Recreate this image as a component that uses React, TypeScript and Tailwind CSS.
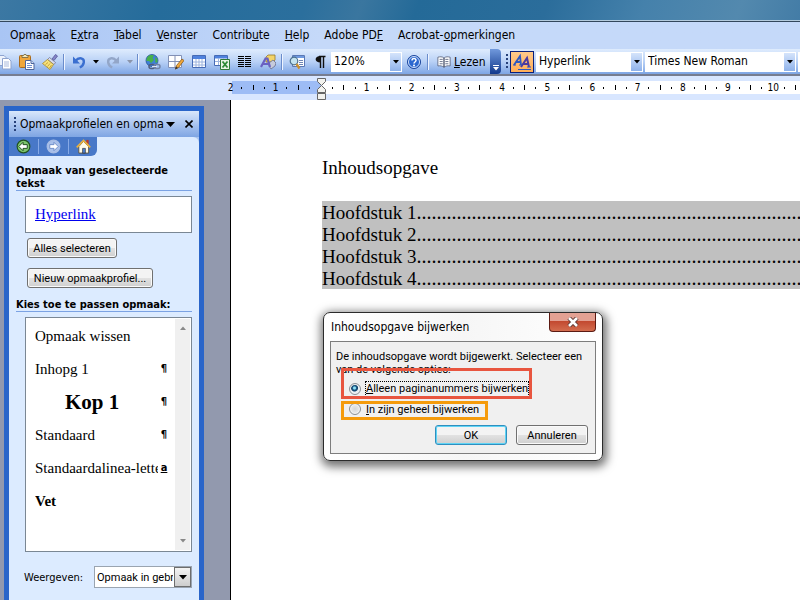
import React, { useState } from 'react';

const UI_FONT = "font-['DejaVu_Sans_Condensed','DejaVu_Sans',sans-serif]";
const SMALL_FONT = "font-['Roboto',sans-serif]";
const DOC_FONT = "font-['Liberation_Serif',serif]";

// [before, access key, after]
const MENU = [
  ['Opmaa', 'k', ''],
  ['E', 'x', 'tra'],
  ['', 'T', 'abel'],
  ['', 'V', 'enster'],
  ['Contrib', 'u', 'te'],
  ['', 'H', 'elp'],
  ['Adobe PD', 'F', ''],
  ['Acrobat-', 'o', 'pmerkingen'],
];

const CHAPTERS = ['Hoofdstuk 1', 'Hoofdstuk 2', 'Hoofdstuk 3', 'Hoofdstuk 4'];

const STYLES = [
  { name: 'Opmaak wissen', cls: 'text-[15px]', mark: '' },
  { name: 'Inhopg 1', cls: 'text-[15px]', mark: '¶' },
  { name: 'Kop 1', cls: 'text-[21px] font-bold pl-[30px]', mark: '¶' },
  { name: 'Standaard', cls: 'text-[15px]', mark: '¶' },
  { name: 'Standaardalinea-lette', cls: 'text-[15px]', mark: 'a' },
  { name: 'Vet', cls: 'text-[15px] font-bold', mark: '' },
];

const Icon = ({ children, className = 'w-4 h-4' }: { children: React.ReactNode; className?: string }) => (
  <svg viewBox="0 0 16 16" className={`${className} shrink-0`} aria-hidden="true">{children}</svg>
);

const CopyIcon = () => (
  <Icon>
    <path d="M2 1.5h6l2 2v8H2z" fill="#eef3fc" stroke="#8ea3cf" />
    <path d="M6.5 4.5h6l2.5 2.5v8H6.5z" fill="#fff" stroke="#8ea3cf" />
    <path d="M8 8h5M8 10h5M8 12h5" stroke="#a9b9dc" />
  </Icon>
);

const PasteIcon = () => (
  <Icon>
    <rect x="0.5" y="1.5" width="11" height="12" rx="1" fill="#f0a63a" stroke="#a96b1c" />
    <path d="M3 3.5V1.5h1.5L5 .5h2l.5 1H9v2z" fill="#f7e7b4" stroke="#6d6340" strokeWidth="0.8" />
    <path d="M6.5 6.5h5.5l3 3v6H6.5z" fill="#fff" stroke="#4d659c" />
    <path d="M12 6.5v3h3" fill="#cfdcf4" stroke="#4d659c" />
    <path d="M8 9.5h3M8 11.5h5M8 13.5h5" stroke="#6f8fd0" />
  </Icon>
);

const BrushIcon = () => (
  <Icon>
    <path d="M10 5l3.5-4.5L15.5 2 12 6.5z" fill="#8787c6" stroke="#54549a" strokeWidth="0.8" />
    <path d="M7.5 3.5l6 5-1.5 2-6.500-5z" fill="#d9dcec" stroke="#666a8d" strokeWidth="0.7" />
    <path d="M5.5 5.500l6 5L8 15.500.500 9.500z" fill="#f6e17d" stroke="#a88b2a" strokeWidth="0.8" />
    <path d="M3.5 10.5l2.5-2M5.5 12.5l2.5-3M7.5 14l2-3" stroke="#c9a538" />
  </Icon>
);

const UndoIcon = ({ color }: { color: string }) => (
  <Icon>
    <path d="M4.5 7C8 2.5 13.500 4 12.800 8.500c-.4 2.500-2 4-4 5" fill="none" stroke={color} strokeWidth="2.4" />
    <path d="M2 2.5V9.500h7z" fill={color} />
  </Icon>
);

const LinkIcon = () => (
  <Icon>
    <circle cx="7" cy="6.5" r="6" fill="#3f7fd6" stroke="#285596" strokeWidth="0.8" />
    <path d="M3 2.5C5 .5 8 1 9 1.5L7.5 4l1.500 2-3 3-2-2-2.500 0C1.500 5 2 3.500 3 2.500zM10 3l2.500 2 0 3-2 1z" fill="#47b04a" />
    <rect x="4" y="10.5" width="6" height="4" rx="2" fill="none" stroke="#4d5d80" strokeWidth="1.5" />
    <rect x="9" y="10.5" width="6" height="4" rx="2" fill="none" stroke="#7384a8" strokeWidth="1.5" />
    <path d="M7 12.5h5" stroke="#dfe6f5" />
  </Icon>
);

const BordersIcon = () => (
  <Icon>
    <path d="M.5 1.5h13v12H.5zM7 1.5v12M.5 7.5h13" fill="#fff" stroke="#8290b5" />
    <path d="M7.5 15l1-3.500 5.500-6.500 2 1.500-5.500 7z" fill="#f2a93c" stroke="#8a5a1c" strokeWidth="0.8" />
    <path d="M7 15.5l1-3 2 1.500z" fill="#333" />
  </Icon>
);

const TableIcon = () => (
  <Icon>
    <path d="M1.5 1.5h13v12h-13z" fill="#fff" stroke="#466bb5" />
    <path d="M2 2h12v3H2z" fill="#4f82de" />
    <path d="M2 8h12M2 11h12M5 5v8M8 5v8M11 5v8" stroke="#9db4de" />
  </Icon>
);

const ExcelIcon = () => (
  <Icon>
    <path d="M.5 1.5h13v10H.5z" fill="#fff" stroke="#466bb5" />
    <path d="M1 2h12v2.500H1z" fill="#4f82de" />
    <path d="M1 7.5h12M4.500 4v7M9.500 4v7" stroke="#9db4de" />
    <path d="M6.5 5.5h9v10h-9z" fill="#e8f3e4" stroke="#2f7a35" />
    <path d="M8.5 7.5l5 6M13.500 7.500l-5 6" stroke="#2c8a34" strokeWidth="1.8" />
  </Icon>
);

const ColumnsIcon = () => (
  <Icon>
    <path
      d="M1 2h6v1H1zM1 4h6v1H1zM1 6h6v1H1zM1 8h6v1H1zM1 10h6v1H1zM1 12h6v1H1zM8 2h6v1H8zM8 4h6v1H8zM8 6h6v1H8zM8 8h6v1H8zM8 10h6v1H8zM8 12h6v1H8z"
      fill="#000"
      shapeRendering="crispEdges"
    />
  </Icon>
);

const DrawingIcon = () => (
  <Icon>
    <path d="M6 3l2-2h7v5l-2 2H6z" fill="#f3d469" stroke="#957a2b" strokeWidth="0.8" />
    <path d="M9 9l4-3 3 3-1 3-4 3-2-3z" fill="#c6cbdb" stroke="#697090" strokeWidth="0.8" />
    <path d="M1 13L5.500 4.500h2L10 13M3 10h6" fill="none" stroke="#6a61c2" strokeWidth="2.2" />
  </Icon>
);

const DocMapIcon = () => (
  <Icon>
    <path d="M3.5 1.5h12v11h-12z" fill="#fff" stroke="#5a78b5" />
    <path d="M4 2h11v2H4z" fill="#6f9ae0" />
    <path d="M10 6.5h4M10 8.500h4M10 10.500h4" stroke="#6e86b5" />
    <circle cx="5" cy="7" r="3.8" fill="#c4e4f0" stroke="#4b708d" strokeWidth="1.2" />
    <path d="M7.5 10l3 4.500" stroke="#c99030" strokeWidth="2.4" />
  </Icon>
);

const HelpIcon = () => (
  <Icon>
    <circle cx="8" cy="8" r="6.5" fill="#2c68cf" stroke="#1c469c" />
    <circle cx="8" cy="8" r="5.5" fill="none" stroke="#cfe0fb" />
    <path d="M6 6.5c0-3 4.200-2.500 4 0-.2 1.500-2 1.500-2 3" fill="none" stroke="#fff" strokeWidth="1.5" />
    <circle cx="8" cy="11.5" r="1" fill="#fff" />
  </Icon>
);

const BookIcon = () => (
  <Icon className="w-[14px] h-[14px]">
    <path d="M8 3.5C6 1.500 3 2 1 2.500v10c3-.5 5 0 7 1.500 2-1.500 4-2 7-1.500v-10c-2-.5-5-1-7 1z" fill="#fff" stroke="#5d6680" />
    <path d="M8 3.5V14" stroke="#3c4560" strokeWidth="1.4" />
    <path d="M3 5h3.500M3 7.500h3.500M3 10h3.500M9.500 5H13M9.500 7.500H13M9.500 10H13" stroke="#5d6680" />
  </Icon>
);

const Arrow = ({ className = 'text-black' }: { className?: string }) => (
  <svg viewBox="0 0 6 4" className={`w-[6px] h-[4px] fill-current ${className}`} aria-hidden="true">
    <path d="M0 0h6L3 3.5z" />
  </svg>
);

const NavArrow = ({ ring, fill, ink, flip }: { ring: string; fill: string; ink: string; flip?: boolean }) => (
  <Icon className="w-[15px] h-[15px]">
    <circle cx="8" cy="8" r="6.8" fill={fill} stroke={ring} strokeWidth="1.2" />
    <path
      d={flip ? 'M13 8L8.500 3.500V6H4v4h4.500v2.500z' : 'M3 8l4.500-4.500V6H12v4H7.500v2.500z'}
      fill="#fff"
      stroke={ink}
      strokeWidth="1"
    />
  </Icon>
);

const HomeIcon = () => (
  <Icon className="w-[15px] h-[15px]">
    <path d="M11 1h2.500v5H11z" fill="#c43a22" />
    <path d="M3 8l5-5.500L13.500 8v7H3z" fill="#fffbe8" stroke="#5c5340" />
    <path d="M.8 9L8 1.500 15.200 9" fill="none" stroke="#ecb23d" strokeWidth="1.8" />
    <path d="M7 10h3v5H7z" fill="#4c7fd0" stroke="#333" strokeWidth="0.7" />
  </Icon>
);

const ToolButton = ({ label, children }: { label: string; children: React.ReactNode }) => (
  <button aria-label={label} className="flex w-[23px] h-6 shrink-0 items-center justify-center">{children}</button>
);

const DropButton = ({ label, dim }: { label: string; dim?: boolean }) => (
  <button aria-label={label} className="flex w-[11px] h-6 shrink-0 items-center justify-center">
    <Arrow className={dim ? 'text-[#8b95ab]' : 'text-black'} />
  </button>
);

const Separator = () => (
  <div className="flex w-[6px] shrink-0 justify-center">
    <div className="h-4 w-px bg-[#6a8ccb]" />
    <div className="h-4 w-px bg-[#eef4ff]" />
  </div>
);

const Combo = ({ label, value, width }: { label: string; value: string; width: string }) => (
  <div className={`relative flex h-5 shrink-0 bg-white ${width}`}>
    <select aria-label={label} className="w-full appearance-none bg-transparent pl-[3px] pr-3 pb-[2px] text-[12px] outline-none">
      <option>{value}</option>
    </select>
    <span className="pointer-events-none absolute inset-y-px right-px flex w-[11px] items-center justify-center bg-linear-to-b from-[#d5e4fb] to-[#8fb2ea]">
      <Arrow />
    </span>
  </div>
);

const Toolbar = () => (
  <div className="flex h-[27px] items-center border-b-2 border-[#777d90] bg-linear-to-b from-[#dfecfd] via-[#b9d1f6] to-[#7ea5e4] text-[12px] overflow-hidden">
    <div className="-ml-2 flex shrink-0 items-center">
      <ToolButton label="Kopiëren"><CopyIcon /></ToolButton>
      <ToolButton label="Plakken"><PasteIcon /></ToolButton>
      <ToolButton label="Opmaak kopiëren"><BrushIcon /></ToolButton>
      <Separator />
      <ToolButton label="Ongedaan maken"><UndoIcon color="#3a6fd0" /></ToolButton>
      <DropButton label="Acties" />
      <ToolButton label="Opnieuw">
        <span className="-scale-x-100"><UndoIcon color="#93a6c8" /></span>
      </ToolButton>
      <DropButton label="Opnieuw acties" dim />
      <Separator />
      <ToolButton label="Hyperlink invoegen"><LinkIcon /></ToolButton>
      <ToolButton label="Tabellen en randen"><BordersIcon /></ToolButton>
      <ToolButton label="Tabel invoegen"><TableIcon /></ToolButton>
      <ToolButton label="Werkblad invoegen"><ExcelIcon /></ToolButton>
      <ToolButton label="Kolommen"><ColumnsIcon /></ToolButton>
      <ToolButton label="Tekenen"><DrawingIcon /></ToolButton>
      <Separator />
      <ToolButton label="Documentstructuur"><DocMapIcon /></ToolButton>
      <ToolButton label="Weergeven">
        <Icon>
          <path d="M7 2.5h6.500M8.500 2v12M11.500 2v12" stroke="#111" strokeWidth="1.4" />
          <path d="M8.5 2C2 2 2 8.500 8.500 8.500z" fill="#111" />
        </Icon>
      </ToolButton>
      <Combo label="In- en uitzoomen" value="120%" width="w-[71px]" />
      <ToolButton label="Help"><HelpIcon /></ToolButton>
      <Separator />
      <button className="flex w-[59px] items-center gap-[3px] pl-[6px]">
        <BookIcon />
        <span><u>L</u>ezen</span>
      </button>
    </div>
    <button aria-label="Werkbalkopties" className="flex h-full w-[11px] shrink-0 flex-col items-center justify-end gap-px rounded-r-sm bg-linear-to-b from-[#7199dc] to-[#12388c] pb-[3px]">
      <span className="h-px w-[6px] bg-white" />
      <Arrow className="text-white" />
    </button>
    <div className="ml-[5px] flex shrink-0 items-center gap-[2px]">
      <div className="h-4 w-[2px] bg-[repeating-linear-gradient(to_bottom,#27417a_0_2px,transparent_2px_4px)]" />
      <button aria-label="Opmaakprofielen en opmaak" className="flex h-[22px] w-6 items-center justify-center border border-[#0a1f7a] bg-linear-to-b from-[#ffc98a] to-[#ffae57]">
        <svg viewBox="0 0 20 18" className="h-[18px] w-5" aria-hidden="true">
          <path d="M2 12L8 3l1 9M4.5 9H9" fill="none" stroke="#2c57c0" strokeWidth="1.8" />
          <path d="M9 14l6-9 2 9M11.5 11H17" fill="none" stroke="#4b3aa0" strokeWidth="2" />
          <path d="M1 12h3M7 12h3M15 14h4M6 16.5h13" stroke="#2c57c0" />
        </svg>
      </button>
      <Combo label="Opmaakprofiel" value="Hyperlink" width="w-[107px]" />
      <Combo label="Lettertype" value="Times New Roman" width="w-[151px]" />
      <Combo label="Tekengrootte" value="" width="w-[45px]" />
    </div>
  </div>
);

const RulerUnit = ({ before, after }: { before?: string; after?: string }) => (
  <div className="grid grid-cols-4 items-center justify-items-center">
    {before && <span>{before}</span>}
    <i className="h-[2px] w-px bg-black" />
    <i className="h-[5px] w-px bg-black" />
    <i className="h-[2px] w-px bg-black" />
    {after && <span>{after}</span>}
  </div>
);

const Ruler = () => (
  <div className="flex h-6 items-start overflow-hidden bg-[#d8e6ff] pt-[5px] text-[10px] leading-[13px]">
    <div className="ml-[225px] w-[97px] shrink-0 bg-[linear-gradient(to_right,transparent_7px,#9dbcf5_7px)]">
      <div className="grid w-[90px] grid-cols-2">
        <RulerUnit before="2" />
        <RulerUnit before="1" />
      </div>
    </div>
    <div className="relative shrink-0 bg-white pl-[5px]">
      <div className="grid w-[497px] grid-cols-11">
        {['1', '2', '3', '4', '5', '6', '7', '8', '9', '10', ''].map((n) => (
          <RulerUnit key={n} after={n} />
        ))}
      </div>
      {/* indent markers */}
      <svg viewBox="0 0 9 22" className="absolute -left-[5px] -top-[3px] h-[22px] w-[9px]" aria-hidden="true">
        <path d="M.5.5h8v3l-4 4-4-4z" fill="#f2f2ee" stroke="#666" />
        <path d="M.5 14.5v-3l4-4 4 4v3z" fill="#f2f2ee" stroke="#666" />
        <path d="M.5 15.5h8v6h-8z" fill="#f2f2ee" stroke="#666" />
      </svg>
    </div>
  </div>
);

const BUTTON =
  'h-5 rounded-[3px] border bg-linear-to-b from-[#f3f3f3] from-50% via-[#e2e2e2] via-50% to-[#cfcfcf] text-[11px] leading-[13px] whitespace-nowrap';
const PLAIN = 'border-[#707070] shadow-[inset_0_0_0_1px_#fafafa]';
const DEFAULT = 'border-[#2f8fbf] shadow-[inset_0_0_0_1px_#5fd4f5]';

const TaskPane = () => (
  <aside className="ml-1 mt-[6px] flex w-[200px] shrink-0 flex-col border-x-[5px] border-t-[5px] border-[#2a65c9] bg-[#dcebff]">
    <div className="flex h-[26px] items-center bg-linear-to-b from-[#d9e7fb] to-[#7fa5e3] pl-[5px] pr-[5px]">
      <div className="h-[15px] w-[2px] shrink-0 bg-[repeating-linear-gradient(to_bottom,#27417a_0_2px,transparent_2px_4px)]" />
      <h2 className="ml-1 w-[144px] shrink-0 overflow-hidden whitespace-nowrap text-[12px]">Opmaakprofielen en opmaak</h2>
      <button aria-label="Andere taakvensters" className="flex w-[13px] shrink-0 justify-center">
        <svg viewBox="0 0 9 5" className="h-[5px] w-[9px]" aria-hidden="true"><path d="M0 0h9L4.5 5z" /></svg>
      </button>
      <button aria-label="Sluiten" className="ml-2 shrink-0">
        <svg viewBox="0 0 8 8" className="h-2 w-2" aria-hidden="true"><path d="M.5.5l7 7M7.5.5l-7 7" stroke="#000" strokeWidth="1.6" /></svg>
      </button>
    </div>
    <div className="bg-[linear-gradient(to_right,#4878c8_20px,#a9c4ef_120px)]">
      <div className="rounded-tr-[6px] bg-[#dcebff]">
        <nav className="flex h-[19px] w-[88px] items-center rounded-br-[6px] bg-[#4878c8] pl-[7px]">
          <button aria-label="Vorige"><NavArrow ring="#20511d" fill="#7cc46c" ink="#1d4a1a" /></button>
          <div className="mx-[7px] h-[15px] w-px bg-[#86a9e6]" />
          <button aria-label="Volgende"><NavArrow ring="#a9bde4" fill="#a9c0ea" ink="#6d8cc9" flip /></button>
          <div className="mx-[7px] h-[15px] w-px bg-[#86a9e6]" />
          <button aria-label="Start"><HomeIcon /></button>
        </nav>
      </div>
    </div>

    <div className="flex flex-1 flex-col pl-[7px] pr-[7px] text-[11px] leading-[13px]">
      <h3 className="mt-2 border-b border-[#7ba2e3] font-bold">Opmaak van geselecteerde tekst</h3>
      <div className={`ml-[9px] mt-[5px] flex h-[37px] items-center border border-[#7a8794] bg-white pl-[9px] text-[15px] ${DOC_FONT}`}>
        <a href="#hyperlink" className="text-[#0000ee] underline">Hyperlink</a>
      </div>
      <button className={`${BUTTON} ${PLAIN} ${SMALL_FONT} ml-[11px] mt-[5px] w-[90px]`}>Alles selecteren</button>
      <button className={`${BUTTON} ${PLAIN} ${SMALL_FONT} ml-[11px] mt-[10px] w-[126px]`}>Nieuw opmaakprofiel...</button>
      <h3 className="mt-[10px] border-b border-[#7ba2e3] font-bold whitespace-nowrap">Kies toe te passen opmaak:</h3>

      <div className="ml-[9px] mt-[5px] flex h-[235px] border border-[#7a8794] bg-white">
        <ul className="min-w-0 flex-1 pt-px">
          {STYLES.map((s) => (
            <li key={s.name} className="flex h-[33px] items-center pl-[9px] pr-1">
              <span className={`w-[123px] shrink-0 overflow-hidden whitespace-nowrap leading-[24px] ${DOC_FONT} ${s.cls}`}>{s.name}</span>
              <span className={`flex-1 text-center font-bold ${s.mark === 'a' ? 'underline' : ''}`}>{s.mark}</span>
            </li>
          ))}
        </ul>
        <div className="m-px flex w-[15px] shrink-0 flex-col items-center justify-between bg-[#f0f0f0] py-[7px]">
          <Arrow className="rotate-180 text-[#888]" />
          <Arrow className="text-[#888]" />
        </div>
      </div>

      <div className="mt-[14px] flex items-center justify-between pl-2">
        <label htmlFor="show">Weergeven:</label>
        <div className="relative w-[98px] border border-[#9aa4b0] bg-white">
          <select id="show" className={`block h-5 w-full appearance-none overflow-hidden bg-transparent pl-[2px] pr-[18px] text-[11px] outline-none ${SMALL_FONT}`}>
            <option>Opmaak in gebruik</option>
          </select>
          <span className="pointer-events-none absolute inset-y-0 right-0 flex w-[17px] items-center justify-center border border-[#6d6d6d] bg-linear-to-b from-[#f4f4f4] to-[#cdcdcd]">
            <svg viewBox="0 0 8 5" className="h-[5px] w-2" aria-hidden="true"><path d="M0 0h8L4 4.5z" /></svg>
          </span>
        </div>
      </div>
    </div>
  </aside>
);

const UpdateDialog = () => {
  const [mode, setMode] = useState('pages');
  const radio =
    'h-3 w-3 shrink-0 appearance-none rounded-full border border-[#8a8f94] bg-[radial-gradient(circle,#d4d6d8,#f6f6f6)] shadow-[inset_0_0_0_1px_#f4f4f4] checked:bg-[radial-gradient(circle_at_45%_40%,#8fe0f5_0_1px,#1c5f8c_2px,#0d3c63_3px,#e8eef2_4px)]';

  return (
    <div role="dialog" aria-labelledby="dialog-title" className="absolute left-[323px] top-[312px] w-[280px] rounded-[7px] border border-[#2b2b2b] bg-linear-to-r from-white via-[#f6f6f6] to-white px-[6px] pb-[6px] shadow-[1px_3px_10px_3px_rgba(0,0,0,0.55)]">
      <div className="flex h-7 items-start justify-between">
        <h2 id="dialog-title" className="pl-px pt-[6px] text-[12px] leading-4">Inhoudsopgave bijwerken</h2>
        <button aria-label="Sluiten" className="flex h-[19px] w-[47px] items-center justify-center rounded-b-[4px] border border-t-0 border-[#5b1a12] bg-linear-to-b from-[#e3a193] from-45% via-[#c2482f] via-45% to-[#d36c4e]">
          <svg viewBox="0 0 12 10" className="h-[10px] w-3" aria-hidden="true">
            <path d="M2 1l8 8M10 1L2 9" stroke="#5a3430" strokeWidth="4.4" />
            <path d="M2 1l8 8M10 1L2 9" stroke="#fff" strokeWidth="2.6" />
          </svg>
        </button>
      </div>
      <div className={`relative border border-[#7d7d7d] bg-[#f0f0f0] pb-2 pl-[5px] pr-[7px] pt-2 text-[11px] leading-[13px] ${SMALL_FONT}`}>
        <p className="whitespace-nowrap">
          De inhoudsopgave wordt bijgewerkt. Selecteer een<br />van de volgende opties:
        </p>
        <div className="mt-[5px] flex flex-col gap-1 pl-[13px]">
          <label className="flex h-4 items-center gap-[4px]">
            <input type="radio" name="mode" className={radio} checked={mode === 'pages'} onChange={() => setMode('pages')} />
            <span className="whitespace-nowrap border border-dotted border-black leading-[14px]"><u>A</u>lleen paginanummers bijwerken</span>
          </label>
          <label className="flex h-4 items-center gap-[5px]">
            <input type="radio" name="mode" className={radio} checked={mode === 'all'} onChange={() => setMode('all')} />
            <span className="whitespace-nowrap"><u>I</u>n zijn geheel bijwerken</span>
          </label>
        </div>
        <div className="mt-2 flex justify-end gap-[9px]">
          <button className={`${BUTTON} ${DEFAULT} w-[72px]`}>OK</button>
          <button className={`${BUTTON} ${PLAIN} w-[72px]`}>Annuleren</button>
        </div>
        {/* highlight frames drawn over the two options */}
        <div className="pointer-events-none absolute left-[10px] top-[26px] h-[31px] w-[191px] border-[3px] border-[#e8553f]" />
        <div className="pointer-events-none absolute left-[10px] top-[59px] h-[19px] w-[147px] border-[3px] border-[#f59b0c]" />
      </div>
    </div>
  );
};

export default function App() {
  return (
    <div className={`relative flex min-h-screen flex-col overflow-hidden bg-white text-black ${UI_FONT}`}>
      <div className="h-[22px] border-b border-[#33475c] bg-[linear-gradient(110deg,#3c78a3_0%,#256c9b_20%,#2b6f9d_38%,#3a769f_45%,#246a98_52%,#2b6d9b_68%,#4581ab_80%,#5389ae_92%,#437ca6_100%)] pt-5">
        <div className="h-px bg-[#b4cbdd]" />
      </div>
      <nav className="flex h-[27px] shrink-0 items-center gap-[15px] bg-linear-to-r from-[#a9c5f4] to-[#c5d9f9] to-40% pl-[10px] pb-px text-[12px]">
        {MENU.map(([before, key, after]) => (
          <button key={before + key + after} className="whitespace-nowrap">
            {before}<u>{key}</u>{after}
          </button>
        ))}
      </nav>
      <Toolbar />
      <Ruler />
      <main className="flex flex-1 bg-[#9299ae]">
        <TaskPane />
        <article className={`ml-[26px] min-w-0 flex-1 border-l border-black bg-white pl-[91px] pt-[57px] text-[19px] leading-[22px] ${DOC_FONT}`}>
          <h1>Inhoudsopgave</h1>
          <ul className="mt-[22px] bg-[#c0c0c0]">
            {CHAPTERS.map((c) => (
              <li key={c} className="flex h-[22px] items-baseline overflow-hidden whitespace-nowrap">
                <span>{c}</span>
                <span className="text-[20px]">{'.'.repeat(100)}</span>
              </li>
            ))}
          </ul>
        </article>
      </main>
      <UpdateDialog />
    </div>
  );
}
